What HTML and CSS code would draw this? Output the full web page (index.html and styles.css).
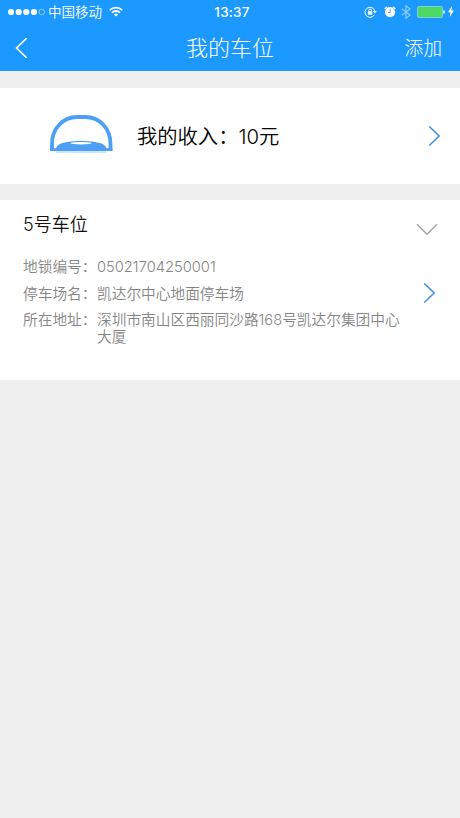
FILE: index.html
```html
<!DOCTYPE html>
<html lang="zh-CN">
<head>
  <meta charset="UTF-8" />
  <meta name="viewport" content="width=device-width, initial-scale=1.0"/>
  <title>我的车位</title>
  <link rel="stylesheet" href="styles.css">
</head>
<body>

  <header class="top">
    <!-- Status bar -->
    <div class="status">
      <div class="carrier">
        <svg width="38" height="8" viewBox="0 0 38 8" fill="#fff">
          <circle cx="3" cy="4" r="3.1"/>
          <circle cx="10.7" cy="4" r="3.1"/>
          <circle cx="18.3" cy="4" r="3.1"/>
          <circle cx="26" cy="4" r="3.1"/>
          <circle cx="33.7" cy="4" r="2.8" fill="none" stroke="#b5e2ff" stroke-width=".7"/>
        </svg>
        <span class="carrier-name">中国移动</span>
        <svg class="wifi" width="14" height="11" viewBox="0 0 14 11" fill="none" stroke="#fff" stroke-width="1.8">
          <path d="M.8 4.2a8.8 8.8 0 0 1 12.4 0M3.1 6.6a5.5 5.5 0 0 1 7.8 0"/>
          <path d="M7 10.6 4.9 8.5a3 3 0 0 1 4.2 0z" fill="#fff" stroke="none"/>
        </svg>
      </div>
      <span class="time">13:37</span>
      <div class="indicators">
        <!-- rotation lock -->
        <svg width="13" height="12" viewBox="0 0 13 12">
          <path d="M10.3 8.9A5 5 0 1 1 10.9 5.2" fill="none" stroke="#fff" stroke-width="1"/>
          <path d="M9 5.1h3.8l-1.9 2.4z" fill="#fff"/>
          <path d="M4.7 5.7V4.5a1.4 1.4 0 0 1 2.8 0v1.2" fill="none" stroke="#fff" stroke-width=".9"/>
          <rect x="3.9" y="5.3" width="4.4" height="3.4" rx=".4" fill="#fff"/>
        </svg>
        <!-- alarm -->
        <svg class="alarm" width="12" height="12" viewBox="0 0 12 12">
          <circle cx="6" cy="6.2" r="5.1" fill="#fff"/>
          <path d="M1.2 2.5 2.6 1.2M10.8 2.5 9.4 1.2" stroke="#fff" stroke-width="1.5" stroke-linecap="round"/>
          <path d="M6.2 3.2v3.200H4" fill="none" stroke="#1b99ff" stroke-width=".9"/>
        </svg>
        <!-- bluetooth -->
        <svg class="bluetooth" width="10" height="14" viewBox="0 0 10 14">
          <path d="M.8 3.8 9 10 5 13.200V.8L9 4 .8 10.200" fill="none" stroke="#8bcdff" stroke-width="1.200"/>
        </svg>
        <svg class="battery" width="28" height="12" viewBox="0 0 28 12">
          <rect x=".5" y=".5" width="25" height="11" rx="1.6" fill="#4cd964" stroke="#8bd0df" stroke-width=".9"/>
          <path d="M26.4 4.1q1.5.4 1.5 1.9t-1.5 1.9z" fill="#fff"/>
        </svg>
        <svg class="bolt" width="6" height="11" viewBox="0 0 6 11">
          <path d="M4 0 0 6.2h2.4L1.7 11 6 4.4H3.4z" fill="#fff"/>
        </svg>
      </div>
    </div>

    <!-- Nav bar -->
    <nav class="nav">
      <a class="back">
        <svg width="13" height="22" viewBox="0 0 13 22"><path d="M11.6 1.2 1.6 11l10 9.8" fill="none" stroke="#fff" stroke-width="1.6"/></svg>
      </a>
      <h1 class="title">我的车位</h1>
      <a class="add">添加</a>
    </nav>
  </header>

  <!-- Income -->
  <section class="income">
    <svg class="lock" width="64" height="38" viewBox="0 0 64 38">
      <path d="M3 36V29C3 13 14.500 2 28 2h8.500C50 2 61.500 13 61.500 29v7" fill="none" stroke="#4c9ff5" stroke-width="3.800"/>
      <path d="M1.100 33.200h6c1-3.400 4-4.900 9-5.800 9.500-1.800 22.500-1.800 32 0 5 .9 8.300 2.400 9.300 5.800h6V36H1.100z" fill="#4c9ff5"/>
      <ellipse cx="32" cy="28.200" rx="10.500" ry="1.200" fill="#fff"/>
      <path d="M7 37h50" stroke="#9acbfa" stroke-width="1"/>
    </svg>
    <span class="income-text">我的收入：10元</span>
    <svg class="arrow" width="13" height="21" viewBox="0 0 13 21"><path d="M1.200 .5 11.200 10 1.200 19.500" fill="none" stroke="#4292ee" stroke-width="1.600"/></svg>
  </section>

  <!-- Parking space -->
  <section class="space">
    <div class="space-head">
      <h2 class="space-name">5号车位</h2>
      <svg class="toggle" width="22" height="13" viewBox="0 0 22 13"><path d="M1 1.200 11 11.200 21 1.200" fill="none" stroke="#a3a3a3" stroke-width="1.500"/></svg>
    </div>
    <div class="space-body">
      <dl class="info">
        <dt>地锁编号：</dt>
        <dd>05021704250001</dd>
        <dt>停车场名：</dt>
        <dd>凯达尔中心地面停车场</dd>
        <dt>所在地址：</dt>
        <dd>深圳市南山区西丽同沙路168号凯达尔集团中心大厦</dd>
      </dl>
      <svg class="arrow" width="13" height="21" viewBox="0 0 13 21"><path d="M1.200 .5 11.200 10 1.200 19.500" fill="none" stroke="#4292ee" stroke-width="1.600"/></svg>
    </div>
  </section>

</body>
</html>
```

FILE: styles.css
```css
* { box-sizing: border-box; }
body { margin: 0; background: #efefef; color: #000; font-family: Inter, "Noto Sans CJK SC", sans-serif; font-weight: 350; }
h1, h2, dl, dd { margin: 0; font-weight: 350; }
svg { display: block; flex: none; }

.top { height: 71px; background: #1b99ff; color: #fff; }
.status { display: grid; grid-template-columns: 1fr auto 1fr; align-items: center; height: 23px; padding: 0 6px 0 8px; }
.carrier { display: flex; align-items: center; }
.carrier-name { margin-left: 2px; font-size: 13.5px; line-height: 22px; }
.wifi { margin-left: 7px; }
.time { margin-left: 2px; font-size: 13.5px; font-weight: 500; letter-spacing: .2px; line-height: 22px; }
.indicators { display: flex; align-items: center; justify-content: flex-end; }
.alarm { margin-left: 7px; }
.bluetooth { margin-left: 5px; }
.battery { margin-left: 6px; }
.bolt { margin-left: 3px; }

.nav { display: grid; grid-template-columns: 1fr auto 1fr; align-items: center; height: 49px; padding: 0 18px 0 15px; }
.title { padding-left: 3px; font-size: 22px; line-height: 32px; }
.add { justify-self: end; padding-top: 2px; font-size: 18.8px; line-height: 28px; }
.title, .add { font-weight: 300; }

.income { display: flex; align-items: center; height: 96px; margin-top: 17px; padding: 0 19px 0 49px; background: #fff; }
.lock { margin-bottom: 5px; }
.income-text { flex: 1; margin-left: 24px; padding-top: 2px; font-size: 20.3px; line-height: 30px; white-space: nowrap; }

.space { height: 180px; margin-top: 16px; padding: 12px 22px 0 23px; background: #fff; }
.space-head { display: flex; justify-content: space-between; }
.space-name { font-size: 18px; line-height: 26px; color: #111; }
.toggle { margin-top: 11px; }
.space-body { display: flex; justify-content: space-between; margin-top: 21px; }
.info { display: grid; grid-template-columns: 74px 312px; row-gap: 9.5px; font-size: 14.7px; line-height: 17px; color: #858585; }
.info dt { white-space: nowrap; }
.space-body .arrow { margin: 24px 2px 0 0; }
```
